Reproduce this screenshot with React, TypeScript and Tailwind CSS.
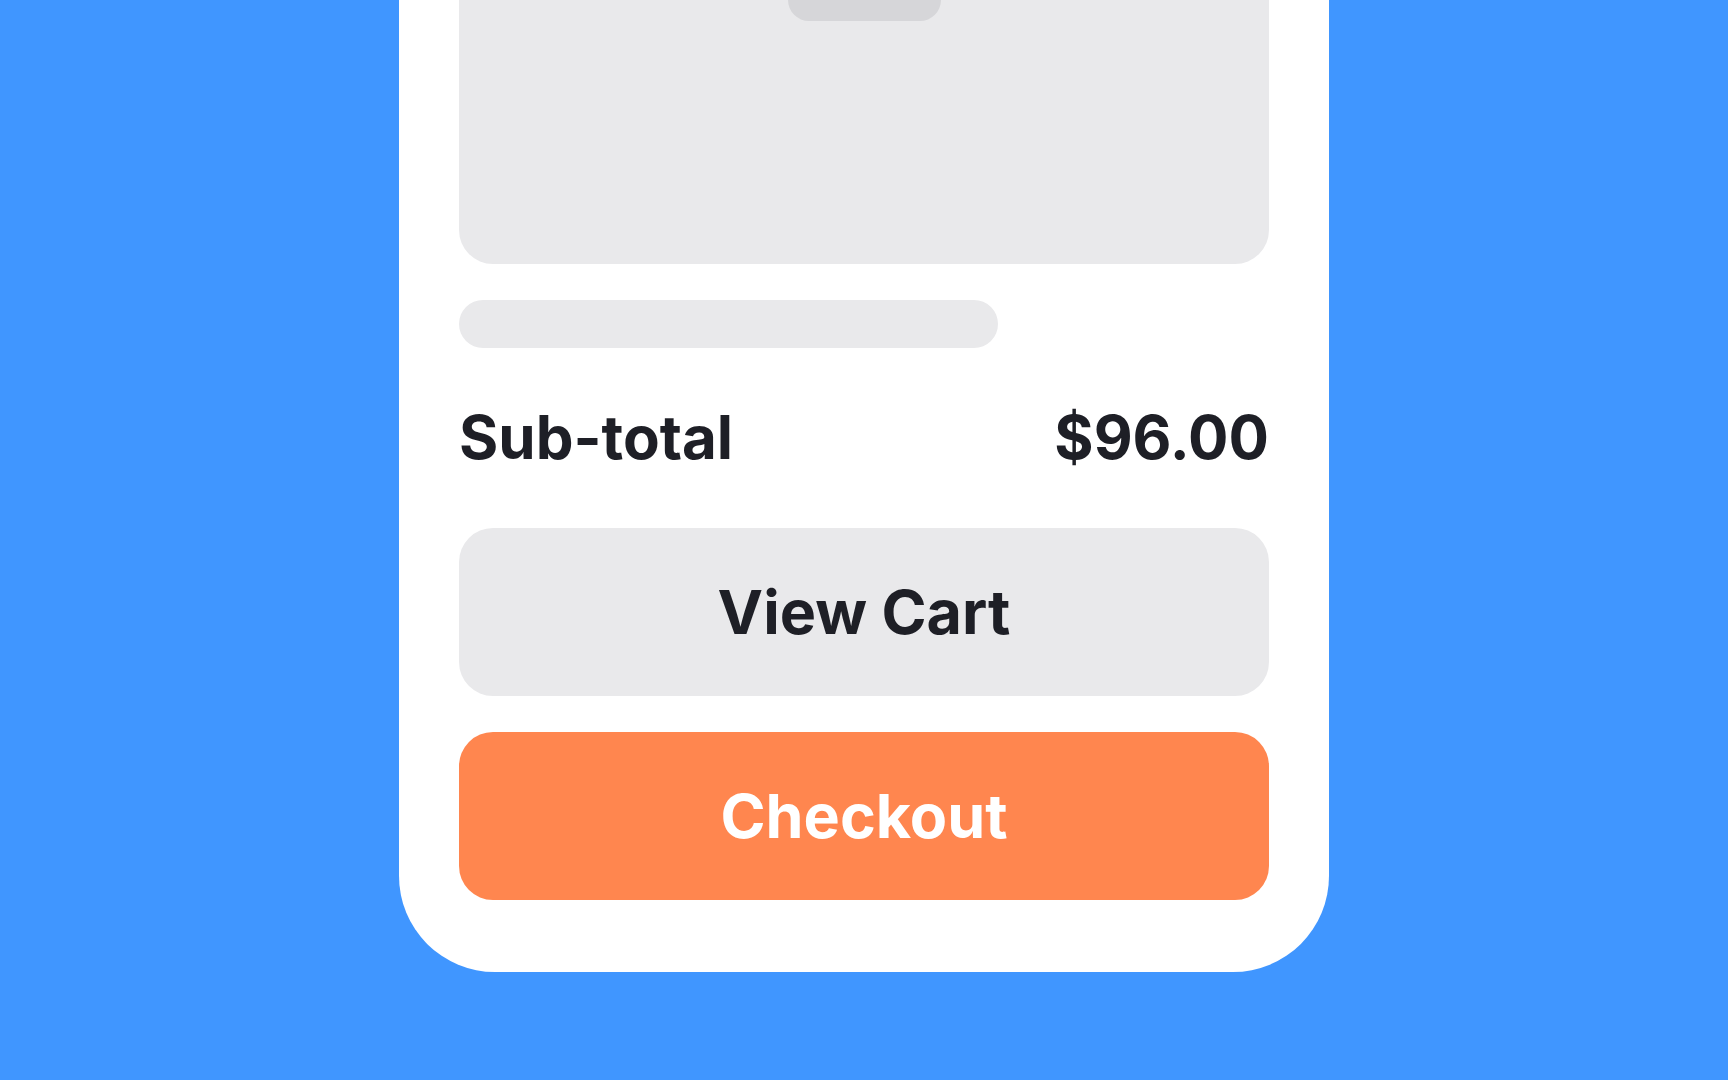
export default function App() {
  return (
    <div
      className="flex h-screen w-full justify-center overflow-hidden bg-[#4096FF]"
      style={{ fontFamily: 'Inter, "Noto Sans", sans-serif' }}
    >
      <div className="mt-[-100px] flex h-[1072px] w-[930px] flex-col rounded-b-[96px] bg-white px-[60px] pb-[72px]">
        {/* product image placeholder */}
        <div className="flex h-[364px] w-full shrink-0 justify-center rounded-b-[34px] bg-[#E9E9EB]">
          <div className="mt-[79px] h-[42px] w-[153px] rounded-full bg-[#D6D6D9]" />
        </div>

        {/* title placeholder */}
        <div className="mt-[36px] h-[48px] w-[539px] shrink-0 rounded-full bg-[#E9E9EB]" />

        {/* totals */}
        <div className="mt-[59px] flex h-[60px] items-center justify-between text-[60px] leading-none font-bold text-[#1E1F26]">
          <span>Sub-total</span>
          <span>$96.00</span>
        </div>

        <button className="mt-[61px] flex h-[168px] w-full shrink-0 items-center justify-center rounded-[34px] bg-[#E9E9EB] text-[61px] leading-none font-bold text-[#1E1F26]">
          View Cart
        </button>

        <button className="mt-[36px] flex h-[168px] w-full shrink-0 items-center justify-center rounded-[34px] bg-[#FF864F] text-[61px] leading-none font-bold text-white">
          Checkout
        </button>
      </div>
    </div>
  );
}
